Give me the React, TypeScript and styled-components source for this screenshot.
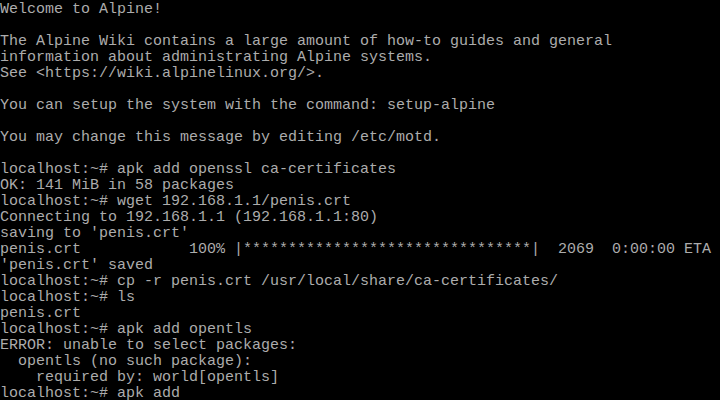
import React from 'react'
import styled, { createGlobalStyle } from 'styled-components';

const GlobalStyle = createGlobalStyle`
html, body {
  margin: 0;
  padding: 0;
  background: #000;
}
`;

const Screen = styled.div`
width: 720px;
height: 400px;
overflow: hidden;
background: #000;
color: #acacac;
font-family: "Liberation Mono", "DejaVu Sans Mono", monospace;
font-size: 15px;
line-height: 15px;
`;

const Line = styled.div`
height: 16px;
box-sizing: border-box;
padding-top: 2px;
white-space: pre;
`;

// console rows, 80 cols x 25 rows
const rows: string[] = [
  "Welcome to Alpine!",
  "",
  "The Alpine Wiki contains a large amount of how-to guides and general",
  "information about administrating Alpine systems.",
  "See <https://wiki.alpinelinux.org/>.",
  "",
  "You can setup the system with the command: setup-alpine",
  "",
  "You may change this message by editing /etc/motd.",
  "",
  "localhost:~# apk add openssl ca-certificates",
  "OK: 141 MiB in 58 packages",
  "localhost:~# wget 192.168.1.1/penis.crt",
  "Connecting to 192.168.1.1 (192.168.1.1:80)",
  "saving to 'penis.crt'",
  "penis.crt            100% |" + "*".repeat(32) + "|  2069  0:00:00 ETA",
  "'penis.crt' saved",
  "localhost:~# cp -r penis.crt /usr/local/share/ca-certificates/",
  "localhost:~# ls",
  "penis.crt",
  "localhost:~# apk add opentls",
  "ERROR: unable to select packages:",
  "  opentls (no such package):",
  "    required by: world[opentls]",
  "localhost:~# apk add",
];

const App = () => {
  return (
    <>
      <GlobalStyle />
      <Screen>
        {rows.map((r, i) => (
          <Line key={i}>{r}</Line>
        ))}
      </Screen>
    </>
  )
}
export default App
